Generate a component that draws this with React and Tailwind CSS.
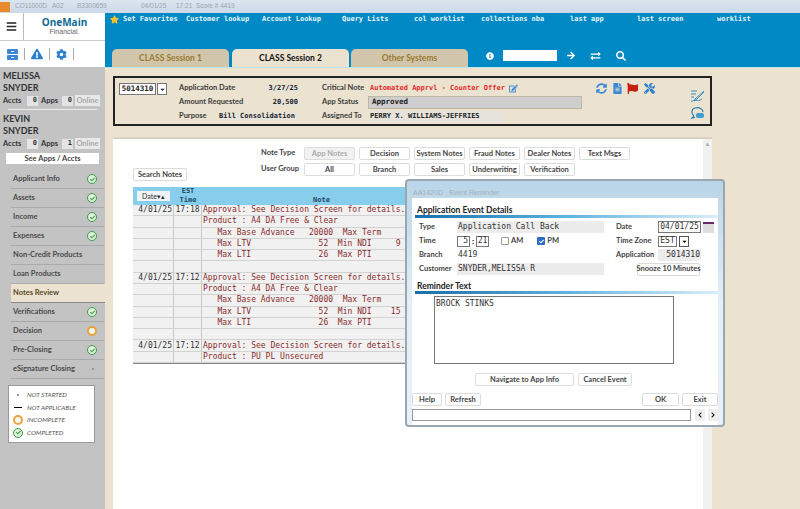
import React from 'react';
import { FaBars, FaExclamationTriangle, FaCog, FaSyncAlt, FaFileAlt, FaFlag, FaTools, FaSearch, FaArrowRight, FaExchangeAlt, FaInfoCircle, FaStar, FaEdit, FaCheck, FaCaretDown, FaChevronLeft, FaChevronRight } from 'react-icons/fa';

const links = [
  ['Customer lookup', 'w-[76px]'],
  ['Account Lookup', 'w-[80px]'],
  ['Query Lists', 'w-[72px]'],
  ['col worklist', 'w-[67px]'],
  ['collections nba', 'w-[89px]'],
  ['last app', 'w-[67px]'],
  ['last screen', 'w-[80px]'],
  ['worklist', 'w-[60px]'],
];

const nav = [
  ['Applicant Info', 'done'],
  ['Assets', 'done'],
  ['Income', 'done'],
  ['Expenses', 'done'],
  ['Non-Credit Products', ''],
  ['Loan Products', ''],
  ['Notes Review', 'active'],
  ['Verifications', 'done'],
  ['Decision', 'incomplete'],
  ['Pre-Closing', 'done'],
  ['eSignature Closing', 'dot'],
];

const noteRows = [
  ['4/01/25', '17:18', 'Approval: See Decision Screen for details.'],
  ['', '', 'Product : A4 DA Free & Clear'],
  ['', '', '   Max Base Advance   20000  Max Term'],
  ['', '', '   Max LTV              52  Min NDI     9'],
  ['', '', '   Max LTI              26  Max PTI'],
  ['', '', ''],
  ['4/01/25', '17:12', 'Approval: See Decision Screen for details.'],
  ['', '', 'Product : A4 DA Free & Clear'],
  ['', '', '   Max Base Advance   20000  Max Term'],
  ['', '', '   Max LTV              52  Min NDI    15'],
  ['', '', '   Max LTI              26  Max PTI'],
  ['', '', ''],
  ['4/01/25', '17:12', 'Approval: See Decision Screen for details.'],
  ['', '', 'Product : PU PL Unsecured'],
];

const mono = "font-['DejaVu_Sans_Mono',monospace]";
const sans = "font-['Lato',sans-serif]";
const wide = "font-['Liberation_Sans',sans-serif]";

function DoneMark() {
  return (
    <span className="flex h-[10px] w-[10px] items-center justify-center rounded-full border border-[#3c9a4c] bg-[#dff0d8] text-[#3c9a4c]">
      <FaCheck className="h-[5px] w-[5px]" />
    </span>
  );
}

function IncompleteMark() {
  return <span className="block h-[10px] w-[10px] rounded-full border-2 border-[#e8a33a] bg-[#f5f5f5]" />;
}

function Btn({ children, className = '', muted }) {
  return (
    <div className={`flex h-[13px] items-center justify-center whitespace-nowrap rounded-[2px] border border-[#dcdcdc] text-[7.5px] font-bold leading-none ${muted ? 'bg-[#f2f2f2] text-[#aaa]' : 'bg-white text-[#444]'} ${className}`}>
      {children}
    </div>
  );
}

function Count({ value }) {
  return <span className={`${mono} flex h-[10px] w-[11px] items-center justify-end bg-[#e4e4e4] pr-[1px] text-[7px] font-bold text-[#333]`}>{value}</span>;
}

function Person({ first, last, apps }) {
  return (
    <div className="pl-[3px] text-[#333]">
      <div className="text-[9px] font-bold leading-[12px]">{first}</div>
      <div className="text-[9px] font-bold leading-[12px]">{last}</div>
      <div className="mt-[1px] flex items-center text-[7.5px] font-bold leading-none">
        <span className="w-[24px]">Accts</span>
        <Count value="0" />
        <span className="ml-[3px] w-[21px]">Apps</span>
        <Count value={apps} />
        <span className="ml-[2px] flex h-[11px] w-[25px] items-center justify-center bg-[#e8e8e8] text-[#aaa]">Online</span>
      </div>
    </div>
  );
}

function Sidebar() {
  return (
    <div className={`${sans} flex w-[105px] shrink-0 flex-col`}>
      <div className="flex h-[27px] bg-white">
        <div className="flex w-[24px] items-center justify-center border-r border-[#bbb] text-[#222]">
          <FaBars className="h-[11px] w-[11px]" />
        </div>
        <div className="flex flex-1 flex-col items-center justify-center">
          <span className="font-['Open_Sans',sans-serif] text-[10px] font-bold leading-[11px] text-[#0f6a93]">OneMain</span>
          <span className={`${wide} text-[7px] leading-[8px] text-[#666]`}>Financial.</span>
        </div>
      </div>
      <div className="flex h-[27px] items-center gap-[6px] border-t border-[#ccc] bg-white pl-[7px]">
        <svg width="11" height="11" viewBox="0 0 11 11"><rect width="11" height="5" rx="1" fill="#3b87d9" /><rect y="6" width="11" height="5" rx="1" fill="#3b87d9" /><rect x="4" y="2" width="3" height="1" fill="#fff" /><rect x="4" y="8" width="3" height="1" fill="#fff" /></svg>
        <span className="h-[12px] w-[1px] bg-[#aaa]" />
        <FaExclamationTriangle className="h-[12px] w-[12px] text-[#2d7fd0]" />
        <span className="h-[12px] w-[1px] bg-[#aaa]" />
        <FaCog className="h-[11px] w-[11px] text-[#2d7fd0]" />
        <span className="h-[12px] w-[1px] bg-[#aaa]" />
      </div>
      <div className="flex-1 bg-[#c3c3c3] pt-[3px]">
        <Person first="MELISSA" last="SNYDER" apps="0" />
        <div className="mx-[8px] my-[3px] h-[1px] bg-[#ececec]" />
        <Person first="KEVIN" last="SNYDER" apps="1" />
        <div className="mx-[6px] mt-[4px] flex h-[11px] items-center justify-center bg-white text-[7.5px] font-bold text-[#444]">See Apps / Accts</div>
        <div className="mt-[6px] pl-[11px]">
          {nav.map(([label, state]) => (
            <div
              key={label}
              className={`flex h-[19px] items-center justify-between whitespace-nowrap border-b pl-[2px] pr-[7px] text-[7.5px] font-bold ${state === 'active' ? 'border-[#888] bg-[#ebe2cf] text-[#5a4a2a]' : 'mr-[1px] border-[#aaa] text-[#4a4a4a]'}`}
            >
              <span>{label}</span>
              {state === 'done' && <DoneMark />}
              {state === 'incomplete' && <IncompleteMark />}
              {state === 'dot' && <span className="mr-[3px] h-[2px] w-[2px] rounded-full bg-[#888]" />}
            </div>
          ))}
        </div>
        <div className="ml-[8px] mt-[6px] flex h-[58px] w-[87px] flex-col justify-center gap-[2.5px] border border-[#999] bg-white pl-[4px] text-[6.5px] italic leading-[10px] text-[#555]">
          <div className="flex items-center gap-[4px]"><span className="flex w-[10px] justify-center"><span className="h-[2px] w-[2px] rounded-full bg-[#777]" /></span>NOT STARTED</div>
          <div className="flex items-center gap-[4px]"><span className="flex w-[10px] justify-center"><span className="h-[1px] w-[8px] bg-black" /></span>NOT APPLICABLE</div>
          <div className="flex items-center gap-[4px]"><IncompleteMark />INCOMPLETE</div>
          <div className="flex items-center gap-[4px]"><DoneMark />COMPLETED</div>
        </div>
      </div>
    </div>
  );
}

function TopBar() {
  const tab = `${sans} flex h-[18px] w-[117px] items-center justify-center rounded-t-[5px] text-[8.5px] font-bold`;
  return (
    <div className="flex h-[55px] flex-col border-b border-[#bfe3f2] bg-[#0089c4]">
      <div className={`${mono} flex h-[12px] items-center whitespace-nowrap pl-[5px] pt-[1px] text-[7px] font-bold text-[#e8f6fb]`}>
        <FaStar className="mr-[4px] h-[9px] w-[9px] text-[#f4c430]" />
        <span className="w-[63px]">Set Favorites</span>
        {links.map(([label, w]) => <span key={label} className={w}>{label}</span>)}
      </div>
      <div className="mt-auto flex items-end pl-[7px]">
        <div className={`${tab} bg-[#d1c6ab] text-[#9a7a30]`}>CLASS Session 1</div>
        <div className={`${tab} ml-[3px] bg-[#ebe2cf] text-[#111]`}>CLASS Session 2</div>
        <div className={`${tab} ml-[2px] bg-[#d1c6ab] text-[#9a7a30]`}>Other Systems</div>
        <div className="mb-[6px] flex items-center pl-[18px] text-white">
          <FaInfoCircle className="h-[8px] w-[8px]" />
          <span className="ml-[9px] h-[11px] w-[54px] bg-white" />
          <FaArrowRight className="ml-[9px] h-[9px] w-[10px]" />
          <FaExchangeAlt className="ml-[14px] h-[10px] w-[11px]" />
          <FaSearch className="ml-[15px] h-[10px] w-[10px]" />
        </div>
      </div>
    </div>
  );
}

function AppHeader() {
  const label = 'whitespace-nowrap text-[7.5px] font-bold leading-none text-[#3c3c3c]';
  const val = `${mono} whitespace-nowrap text-[7px] font-bold leading-none text-[#222]`;
  return (
    <div className={`${sans} ml-[8px] mt-[8px] flex h-[50px] w-[599px] border-2 border-[#222] bg-[#ebe2cf]`}>
      <div className="ml-[4px] mt-[5px] flex h-[12px] w-[48px] items-start">
        <span className={`${mono} flex h-[12px] w-[37px] items-center justify-center border border-[#777] bg-white text-[7.5px] font-bold text-[#222]`}>5014310</span>
        <span className="ml-[1px] flex h-[12px] w-[10px] items-center justify-center border border-[#777] bg-white text-[#224]"><FaCaretDown className="h-[7px] w-[7px]" /></span>
      </div>
      <div className="ml-[12px] flex w-[131px] flex-col justify-center gap-[6px] pt-[2px]">
        <div className="flex h-[8px] items-center justify-between"><span className={label}>Application Date</span><span className={`${val} mr-[10px] bg-[#e6e3dc] px-[2px]`}>3/27/25</span></div>
        <div className="flex h-[8px] items-center justify-between"><span className={label}>Amount Requested</span><span className={`${val} mr-[10px] bg-[#e6e3dc] px-[2px]`}>20,500</span></div>
        <div className="flex h-[8px] items-center"><span className={`${label} w-[40px]`}>Purpose</span><span className={`${val} bg-[#e6e3dc] pr-[2px]`}>Bill Consolidation</span></div>
      </div>
      <div className="ml-[12px] flex w-[262px] flex-col justify-center gap-[6px] pt-[2px]">
        <div className="flex h-[8px] items-center"><span className={`${label} w-[48px]`}>Critical Note</span><span className={`${val} text-[#e32b2b]`}>Automated Apprvl - Counter Offer</span><FaEdit className="ml-[4px] h-[9px] w-[9px] text-[#4a90d9]" /></div>
        <div className="flex h-[8px] items-center"><span className={`${label} w-[46px]`}>App Status</span><span className={`${mono} flex h-[13px] w-[214px] items-center border border-[#bdb7a5] bg-[#cfcfcf] pl-[3px] text-[7.5px] font-bold text-[#222]`}>Approved</span></div>
        <div className="flex h-[8px] items-center"><span className={`${label} w-[48px]`}>Assigned To</span><span className={`${val} w-[135px] bg-[#e6e3dc] py-[2px]`}>PERRY X. WILLIAMS-JEFFRIES</span></div>
      </div>
      <div className="ml-[12px] mt-[4px] flex h-[12px] w-[60px] items-center gap-[5.5px]">
        <FaSyncAlt className="h-[11px] w-[11px] text-[#3b87d9]" />
        <FaFileAlt className="h-[11px] w-[9px] text-[#3b87d9]" />
        <FaFlag className="h-[11px] w-[11px] text-[#c8200e]" />
        <FaTools className="h-[11px] w-[11px] text-[#2d7fd0]" />
      </div>
      <div className="ml-[34px] mt-[12px] flex flex-col items-center gap-[3px]">
        <svg width="15" height="13" viewBox="0 0 15 13" fill="none" stroke="#3f8fc4" strokeWidth="1"><path d="M1 1h6M1 4h5M1 7h3" /><path d="M14 1 5 9l-1 2 2-1 8-8M1 11c2 1 3-2 5-1s3 1 6-1" /></svg>
        <svg width="15" height="14" viewBox="0 0 15 14" fill="none" stroke="#2d7fb0" strokeWidth="1.2"><path d="M4 10C1 8 1 3 5 2c4-1 8 1 8 4" /><path d="M4 10l-2 2 3-.5" /><rect x="6" y="7" width="8" height="5" rx="2" fill="#3f9fd0" stroke="none" /></svg>
      </div>
    </div>
  );
}

function NotesTable() {
  return (
    <div className="mt-[6px] w-[560px] border-b border-[#888]">
      <div className={`${mono} flex h-[18px] bg-[#87cdec] text-[7px] font-bold leading-[9px] text-[#1c4a63]`}>
        <div className="flex w-[41px] items-center pl-[4px]">
          <span className={`${sans} flex h-[10px] w-[33px] items-center justify-center bg-[#f0f4f8] text-[7px] font-normal text-[#333]`}>Date▾▴</span>
        </div>
        <div className="w-[28px] text-center">EST<br />Time</div>
        <div className="flex flex-1 items-end pl-[111px]">Note</div>
      </div>
      {noteRows.map((r, i) => (
        <div key={i} className={`${mono} flex h-[11.29px] items-center border-b border-[#d2d2d2] bg-[#f1f1f1] text-[8px] leading-none text-[#8a2b2b]`}>
          <span className="flex h-full w-[41px] items-center justify-end border-r border-[#c8c8c8] pr-[1px] text-[#333]">{r[0]}</span>
          <span className="flex h-full w-[28px] items-center justify-center border-r border-[#c8c8c8] text-[#333]">{r[1]}</span>
          <span className="whitespace-pre pl-[1px]">{r[2]}</span>
        </div>
      ))}
    </div>
  );
}

function NotesPanel() {
  const b = 'w-[51px] shrink-0';
  const label = 'w-[39px] whitespace-nowrap text-[7.5px] font-bold leading-[12px] text-[#444]';
  return (
    <div className={`${sans} relative ml-[8px] mt-[11px] flex w-[599px] flex-1 flex-col border-t-2 border-[#d8d2c2] bg-white pl-[20px] pt-[8px]`}>
      <div className="flex h-[34px]">
        <div className="flex w-[128px] flex-col justify-end">
          <Btn className="w-[54px]">Search Notes</Btn>
        </div>
        <div className="flex flex-col gap-[3px]">
          <div className="flex gap-[4px]">
            <span className={label}>Note Type</span>
            <Btn muted className={b}>App Notes</Btn>
            <Btn className={b}>Decision</Btn>
            <Btn className={b}>System Notes</Btn>
            <Btn className={b}>Fraud Notes</Btn>
            <Btn className={b}>Dealer Notes</Btn>
            <Btn className={b}>Text Msgs</Btn>
          </div>
          <div className="flex gap-[4px]">
            <span className={label}>User Group</span>
            <Btn className={b}>All</Btn>
            <Btn className={b}>Branch</Btn>
            <Btn className={b}>Sales</Btn>
            <Btn className={b}>Underwriting</Btn>
            <Btn className={b}>Verification</Btn>
          </div>
        </div>
      </div>
      <NotesTable />
      <div className="absolute inset-y-0 right-0 w-[9px] bg-[#f1f1f1] pt-[2px] text-center text-[6px] leading-none text-[#aaa]">▲</div>
    </div>
  );
}

function SectionTitle({ children }) {
  return (
    <div className="pl-[5px]">
      <div className="text-[8.5px] font-bold leading-[10px] text-[#222]">{children}</div>
      <div className="-ml-[2px] h-[3px] bg-gradient-to-r from-[#1a6ea8] via-[#5fb2e0] to-[#d9eef8]" />
    </div>
  );
}

function EventModal() {
  const label = 'whitespace-nowrap text-[7.5px] font-bold text-[#444] leading-none';
  const field = `${mono} text-[8px] leading-none text-[#333]`;
  return (
    <div className={`${sans} absolute left-[405px] top-[179px] flex h-[248px] w-[320px] flex-col rounded-[4px] border-2 border-[#9aa7b0] bg-gradient-to-b from-[#b9d5e8] via-[#e4eff6] to-[#e8f1f7] px-[5px]`}>
      <div className={`${wide} flex h-[16px] items-end pl-[1px] text-[7px] leading-[9px] text-[#9fb0bb]`}>AA1420D · Event Reminder</div>
      <div className="mt-[1px] flex-1 bg-white">
        <div className="pt-[7px]">
          <SectionTitle>Application Event Details</SectionTitle>
        </div>
        <div className="ml-[7px] mt-[2px] flex">
          <div className="flex w-[189px] flex-col">
            <div className="flex h-[14px] items-center"><span className={`${label} w-[38px]`}>Type</span><span className={`${field} flex h-[12px] w-[147px] items-center bg-[#ececec] pl-[1px]`}>Application Call Back</span></div>
            <div className="flex h-[14px] items-center">
              <span className={`${label} w-[38px]`}>Time</span>
              <span className={`${field} flex h-[11px] w-[13px] items-center justify-end border border-[#777] pr-[1px]`}>5</span>
              <span className="mx-[2px] w-[2px] text-[8px] font-bold leading-none">:</span>
              <span className={`${field} flex h-[11px] w-[13px] items-center justify-center border border-[#777]`}>21</span>
              <span className="ml-[12px] h-[8px] w-[8px] rounded-[1px] border border-[#999]" />
              <span className={`${label} ml-[2px]`}>AM</span>
              <span className="ml-[14px] flex h-[8px] w-[8px] items-center justify-center rounded-[1px] bg-[#2a6fc4] text-white"><FaCheck className="h-[5px] w-[5px]" /></span>
              <span className={`${label} ml-[2px]`}>PM</span>
            </div>
            <div className="flex h-[14px] items-center"><span className={`${label} w-[38px]`}>Branch</span><span className={`${field} pl-[1px]`}>4419</span></div>
            <div className="flex h-[14px] items-center"><span className={`${label} w-[38px]`}>Customer</span><span className={`${field} flex h-[12px] w-[147px] items-center bg-[#ececec] pl-[1px]`}>SNYDER,MELISSA R</span></div>
          </div>
          <div className="ml-[8px] flex flex-col">
            <div className="flex h-[14px] items-center"><span className={`${label} w-[42px]`}>Date</span><span className={`${field} flex h-[12px] w-[43px] items-center justify-center border border-[#777]`}>04/01/25</span><span className="ml-[2px] h-[11px] w-[11px] border-t-2 border-[#6a2a6a] bg-[#ddd]" /></div>
            <div className="flex h-[14px] items-center"><span className={`${label} w-[42px]`}>Time Zone</span><span className={`${field} flex h-[11px] w-[19px] items-center justify-center border border-[#777]`}>EST</span><span className="ml-[2px] flex h-[11px] w-[10px] items-center justify-center border border-[#555]"><FaCaretDown className="h-[7px] w-[7px]" /></span></div>
            <div className="flex h-[14px] items-center"><span className={`${label} w-[42px]`}>Application</span><span className={`${field} flex h-[12px] w-[43px] items-center justify-end bg-[#ececec] pr-[1px]`}>5014310</span></div>
            <div className="flex h-[14px] items-center pl-[21px]"><Btn className="w-[63px]">Snooze 10 Minutes</Btn></div>
          </div>
        </div>
        <div className="mt-[5px]">
          <SectionTitle>Reminder Text</SectionTitle>
        </div>
        <div className={`${mono} ml-[22px] mt-[2px] h-[68px] w-[240px] border border-[#777] pl-[1px] pt-[2px] text-[8px] leading-[10px] text-[#333]`}>BROCK STINKS</div>
        <div className="ml-[63px] mt-[9px] flex gap-[4px]">
          <Btn className="w-[99px]">Navigate to App Info</Btn>
          <Btn className="w-[54px]">Cancel Event</Btn>
        </div>
        <div className="mt-[7px] flex">
          <Btn className="w-[30px]">Help</Btn>
          <Btn className="ml-[3px] w-[36px]">Refresh</Btn>
          <Btn className="ml-auto w-[37px]">OK</Btn>
          <Btn className="ml-[3px] w-[36px]">Exit</Btn>
        </div>
        <div className="mt-[3px] flex items-center">
          <span className="h-[12px] w-[281px] border border-[#999] bg-white" />
          <span className="ml-[4px] flex h-[12px] w-[10px] items-center justify-center bg-[#eee]"><FaChevronLeft className="h-[6px] w-[6px]" /></span>
          <span className="ml-[3px] flex h-[12px] w-[10px] items-center justify-center bg-[#eee]"><FaChevronRight className="h-[6px] w-[6px]" /></span>
        </div>
      </div>
    </div>
  );
}

export default function App() {
  return (
    <div className="relative flex h-[509px] w-[800px] flex-col overflow-hidden bg-[#ebe2cf]">
      {/* Window title */}
      <div className={`${wide} flex h-[13px] items-center whitespace-nowrap bg-gradient-to-b from-[#dbe5f0] to-[#ccd9e8] text-[6.5px] leading-none text-[#9aa5ad]`}>
        <span className="mr-[5px] h-[10px] w-[10px] bg-[#e98a2d]" />
        <span className="w-[37px]">CO11000D</span>
        <span className="w-[25px]">A02</span>
        <span className="w-[64px]">B3300659</span>
        <span className="w-[35px]">04/01/25</span>
        <span className="w-[20px]">17:21</span>
        <span>Score # 4419</span>
      </div>
      <div className="flex flex-1">
        <Sidebar />
        <div className="flex flex-1 flex-col">
          <TopBar />
          <AppHeader />
          <NotesPanel />
        </div>
      </div>
      <EventModal />
    </div>
  );
}
